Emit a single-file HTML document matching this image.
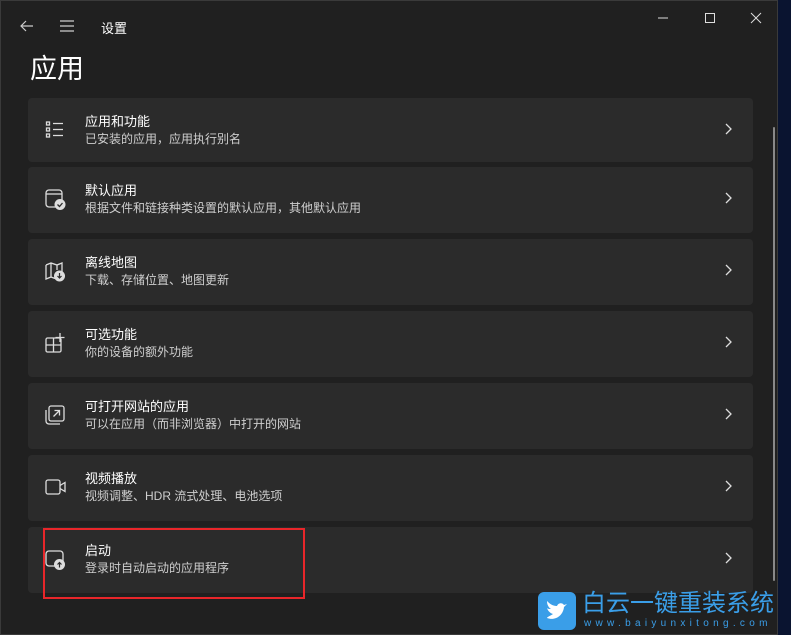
<!DOCTYPE html>
<html><head><meta charset="utf-8"><style>
*{margin:0;padding:0;box-sizing:border-box}
body{width:791px;height:635px;background:#0a1430;overflow:hidden;font-family:"Liberation Sans","Noto Sans CJK SC",sans-serif;position:relative}
.win{position:absolute;left:0;top:0;width:778px;height:635px;background:#202020;border:1px solid #3a3a3a}
.t{position:absolute;color:#fff}
.card{position:absolute;left:27px;width:725px;height:66px;background:#2b2b2b;border-radius:4px}
.card .ti{position:absolute;left:57px;top:13px;font-size:13px;color:#fff}
.card .sub{position:absolute;left:57px;top:32px;font-size:12px;color:#cfcfcf}
.card svg.ic{position:absolute;left:16px;top:21px}
.card .ch{position:absolute;right:19px;top:24px}
</style></head><body>
<div class="win">
<svg style="position:absolute;left:18px;top:17px" width="16" height="16"><path d="M14 8H2M7 3L2 8l5 5" stroke="#ccc" fill="none" stroke-width="1.2"/></svg>
<svg style="position:absolute;left:58px;top:18px" width="16" height="14"><path d="M1 2h14M1 7h14M1 12h14" stroke="#ccc" stroke-width="1.2"/></svg>
<div class="t" style="left:100px;top:17px;font-size:13px">设置</div>
<svg style="position:absolute;left:655px;top:9px" width="110" height="16"><path d="M2 8h10" stroke="#ddd"/><rect x="49.5" y="3.5" width="9" height="9" fill="none" stroke="#ddd"/><path d="M95 3l10 10M105 3l-10 10" stroke="#ddd"/></svg>
<div class="t" style="left:29px;top:46px;font-size:27px">应用</div>
<div style="position:absolute;left:772px;top:126px;width:2px;height:454px;background:#888;border-radius:1px"></div>

<div class="card" style="top:97px;height:64px"><svg class="ic" width="22" height="22"><g stroke="#ddd" fill="none" stroke-width="1.3"><rect x="2.5" y="3" width="3" height="3"/><rect x="2.5" y="9" width="3" height="3"/><rect x="2.5" y="15" width="3" height="3"/><path d="M9 4.5h10M9 10.5h10M9 16.5h10"/></g></svg><div class="ti">应用和功能</div><div class="sub">已安装的应用，应用执行别名</div><svg class="ch" width="10" height="14"><path d="M2 2l5 5-5 5" stroke="#ddd" fill="none" stroke-width="1.3"/></svg></div>

<div class="card" style="top:166px"><svg class="ic" width="22" height="22"><g stroke="#ddd" fill="none" stroke-width="1.3"><rect x="2" y="2" width="16" height="17" rx="3"/><path d="M2 6h16"/></g><circle cx="16" cy="16.5" r="5.5" fill="#ddd"/><path d="M13.5 16.5l2 2 3-3.5" stroke="#2b2b2b" fill="none" stroke-width="1.3"/></svg><div class="ti">默认应用</div><div class="sub">根据文件和链接种类设置的默认应用，其他默认应用</div><svg class="ch" width="10" height="14"><path d="M2 2l5 5-5 5" stroke="#ddd" fill="none" stroke-width="1.3"/></svg></div>

<div class="card" style="top:238px"><svg class="ic" width="22" height="22"><path d="M2 5l5-2 6 2 5-2v9M2 5v14l5-2 4 1.5M7 3v14M13 5v5" stroke="#ddd" fill="none" stroke-width="1.3"/><circle cx="15.5" cy="16" r="5.5" fill="#ddd"/><path d="M15.5 13v5M13.5 16l2 2 2-2" stroke="#2b2b2b" fill="none" stroke-width="1.2"/></svg><div class="ti">离线地图</div><div class="sub">下载、存储位置、地图更新</div><svg class="ch" width="10" height="14"><path d="M2 2l5 5-5 5" stroke="#ddd" fill="none" stroke-width="1.3"/></svg></div>

<div class="card" style="top:310px"><svg class="ic" width="22" height="22"><g stroke="#ddd" fill="none" stroke-width="1.3"><rect x="2" y="6" width="15" height="14" rx="1.5"/><path d="M9.5 6v14M2 13h15M16 1v9M11.5 5.5h9"/></g></svg><div class="ti">可选功能</div><div class="sub">你的设备的额外功能</div><svg class="ch" width="10" height="14"><path d="M2 2l5 5-5 5" stroke="#ddd" fill="none" stroke-width="1.3"/></svg></div>

<div class="card" style="top:382px"><svg class="ic" width="22" height="22"><g stroke="#ddd" fill="none" stroke-width="1.3"><rect x="5" y="2" width="15" height="15" rx="2"/><path d="M2 6v11a3 3 0 0 0 3 3h11M9.5 12.5l6-6M10.5 6.5h5v5"/></g></svg><div class="ti">可打开网站的应用</div><div class="sub">可以在应用（而非浏览器）中打开的网站</div><svg class="ch" width="10" height="14"><path d="M2 2l5 5-5 5" stroke="#ddd" fill="none" stroke-width="1.3"/></svg></div>

<div class="card" style="top:454px"><svg class="ic" width="22" height="22"><g stroke="#ddd" fill="none" stroke-width="1.3"><rect x="2" y="4" width="14" height="14" rx="2"/><path d="M16 9.5l5-3v9l-5-3"/></g></svg><div class="ti">视频播放</div><div class="sub">视频调整、HDR 流式处理、电池选项</div><svg class="ch" width="10" height="14"><path d="M2 2l5 5-5 5" stroke="#ddd" fill="none" stroke-width="1.3"/></svg></div>

<div class="card" style="top:526px"><svg class="ic" width="22" height="22"><rect x="2" y="3" width="17" height="15" rx="3" stroke="#ddd" fill="none" stroke-width="1.3"/><circle cx="15.5" cy="16.5" r="5.5" fill="#ddd"/><path d="M15.5 19.5v-5M13.5 16.5l2-2 2 2" stroke="#2b2b2b" fill="none" stroke-width="1.2"/></svg><div class="ti">启动</div><div class="sub">登录时自动启动的应用程序</div><svg class="ch" width="10" height="14"><path d="M2 2l5 5-5 5" stroke="#ddd" fill="none" stroke-width="1.3"/></svg></div>

<div style="position:absolute;left:42px;top:527px;width:262px;height:71px;border:2px solid #e8262a"></div>
</div>
<div style="position:absolute;left:538px;top:592px;width:38px;height:38px;background:#3a9ee8;border-radius:6px"><svg width="38" height="38"><path d="M9 26c8 3 16-2 17-11l3-3-3 1c-2-3-6-2-7 1-5 0-8-3-10-5 0 3 1 6 4 8-2 0-3 0-4-1 1 3 3 5 6 6-3 2-6 3-6 4z" fill="#fff"/></svg></div>
<div style="position:absolute;left:582px;top:590px;font-size:24px;line-height:28px;color:#3a9ee8;white-space:nowrap">白云一键重装系统</div>
<div style="position:absolute;left:584px;top:618px;font-size:10px;line-height:12px;color:#3a9ee8;letter-spacing:4.3px;white-space:nowrap">www.baiyunxitong.com</div>
</body></html>
